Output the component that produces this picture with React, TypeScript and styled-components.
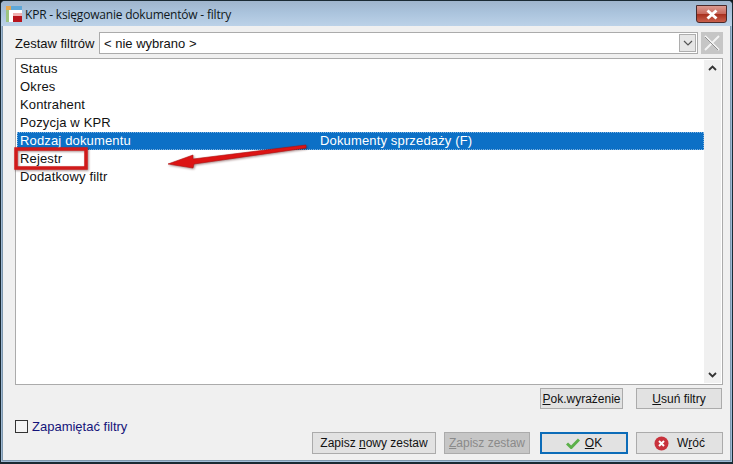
import React from "react";
import styled, { createGlobalStyle } from "styled-components";

const Global = createGlobalStyle`
  html, body { margin: 0; padding: 0; background: #10181c; }
  * { box-sizing: border-box; }
`;

const Win = styled.div`
  position: relative;
  width: 733px;
  height: 464px;
  display: flex;
  flex-direction: column;
  overflow: hidden;
  border: 1px solid #1a2a33;
  border-bottom-width: 2px;
  border-radius: 5px 5px 0 0;
  background: linear-gradient(90deg, #9db8d3 0%, #a9c4df 50%, #9db9d6 100%);
  font-family: "Liberation Sans", Arial, sans-serif;
  font-size: 13px;
  color: #111;
`;

const TitleBar = styled.div`
  height: 25px;
  flex: none;
  display: flex;
  align-items: center;
  padding-left: 4px;
  gap: 2px;
  position: relative;
  background: linear-gradient(180deg, #9fb5cc 0%, #aac3dc 45%, #bcd2e8 100%);
`;

const TitleText = styled.span`
  font-family: "Open Sans", "Noto Sans", sans-serif;
  font-size: 12px;
  letter-spacing: -0.2px;
  color: #101820;
  margin-top: 1px;
`;

const CloseBtn = styled.div`
  position: absolute;
  right: 5px;
  top: 4px;
  width: 31px;
  height: 18px;
  border: 1px solid #4a2a2a;
  border-radius: 0 0 3px 3px;
  display: flex;
  align-items: center;
  justify-content: center;
  background: linear-gradient(180deg, #dc9a90 0%, #c8695c 48%, #a8301e 52%, #c9604c 100%);
`;

const Body = styled.div`
  flex: 1;
  margin: 0 1px 1px 1px;
  background: #f0f0f0;
  border-left: 1px solid #7f98ad;
  border-right: 1px solid #7f98ad;
  border-bottom: 1px solid #7f98ad;
  padding: 6px 7px 0 12px;
  display: flex;
  flex-direction: column;
`;

const FilterRow = styled.div`
  display: flex;
  align-items: center;
  height: 22px;
  gap: 3px;
`;

const FilterLabel = styled.label`
  width: 81px;
  flex: none;
`;

const Combo = styled.div`
  flex: 1;
  height: 22px;
  background: #fff;
  border: 1px solid #ababab;
  padding: 0 1px 0 4px;
  display: flex;
  align-items: center;
  justify-content: space-between;
`;

const ComboArrow = styled.div`
  width: 17px;
  height: 18px;
  background: #e6e6e6;
  border: 1px solid #adadad;
  display: flex;
  align-items: center;
  justify-content: center;
`;

const ClearBtn = styled.div`
  width: 22px;
  height: 22px;
  background: #c6c6c6;
  display: flex;
  align-items: center;
  justify-content: center;
`;

const ListBox = styled.div`
  margin-top: 4px;
  height: 327px;
  flex: none;
  background: #fff;
  border: 1px solid #ababab;
  padding: 1px;
  display: flex;
`;

const Rows = styled.div`
  flex: 1;
`;

const Row = styled.div<{ $selected?: boolean }>`
  height: 18px;
  display: flex;
  align-items: center;
  padding: 0 0 2px 3px;
  letter-spacing: 0.15px;
  background: ${(p) => (p.$selected ? "#0c70c6" : "transparent")};
  color: ${(p) => (p.$selected ? "#fff" : "#111")};
  outline: ${(p) => (p.$selected ? "1px dotted #7fb2de" : "none")};
  outline-offset: -1px;
`;

const RowName = styled.span`
  width: 300px;
  flex: none;
`;

const ScrollTrack = styled.div`
  width: 17px;
  background: #f0f0f0;
  display: flex;
  flex-direction: column;
  justify-content: space-between;
  align-items: center;
  padding: 5px 0;
`;

const ActionRow = styled.div`
  display: flex;
  justify-content: flex-end;
  gap: 13px;
  margin: 3px 1px 0 0;
`;

const Btn = styled.div<{
  $w: number;
  $h: number;
  $gap?: number;
  $ml?: number;
  $disabled?: boolean;
  $default?: boolean;
}>`
  width: ${(p) => p.$w}px;
  height: ${(p) => p.$h}px;
  margin-left: ${(p) => p.$ml ?? 0}px;
  display: flex;
  align-items: center;
  justify-content: center;
  gap: ${(p) => p.$gap ?? 0}px;
  font-size: 12px;
  white-space: nowrap;
  background: ${(p) => (p.$disabled ? "#c6c6c6" : "#e2e2e2")};
  color: ${(p) => (p.$disabled ? "#8a8a8a" : "#111")};
  border: ${(p) => (p.$default ? "2px solid #0c6cb8" : "1px solid #ababab")};
`;

const Footer = styled.div`
  display: flex;
  align-items: flex-start;
  margin-top: 8px;
`;

const RememberBox = styled.div`
  display: flex;
  align-items: center;
  gap: 4px;
  color: #14147a;
  height: 18px;
`;

const Check = styled.div`
  width: 13px;
  height: 13px;
  border: 1px solid #333;
  background: #f4f4f4;
`;

const FooterBtns = styled.div`
  margin-left: auto;
  margin-top: 15px;
  display: flex;
  gap: 8px;
`;

const Overlay = styled.svg`
  position: absolute;
  left: -1px;
  top: -1px;
  pointer-events: none;
  filter: drop-shadow(1px 1px 1px rgba(60, 0, 0, 0.45));
`;

const App = () => (
  <>
    <Global />
    <Win>
      <TitleBar>
        <svg width="18" height="18" viewBox="0 0 18 18">
          <rect x="1" y="1" width="16" height="16" fill="#fff" />
          <rect x="1" y="1" width="5" height="4" fill="#e8a850" />
          <rect x="6" y="1" width="11" height="4" fill="#5fa8d8" />
          <rect x="1" y="5" width="3" height="12" fill="#9cc480" />
          <rect x="8" y="8" width="9" height="9" fill="#b8141c" />
          <rect x="8" y="8" width="9" height="3" fill="#f0b0b0" />
        </svg>
        <TitleText>KPR - księgowanie dokumentów - filtry</TitleText>
        <CloseBtn>
          <svg width="14" height="11" viewBox="0 0 14 11">
            <path d="M2.5 1.5 L11.5 9.5 M11.5 1.5 L2.5 9.5" stroke="#fff" strokeWidth="3" />
          </svg>
        </CloseBtn>
      </TitleBar>
      <Body>
        <FilterRow>
          <FilterLabel>Zestaw filtrów</FilterLabel>
          <Combo>
            <span>&lt; nie wybrano &gt;</span>
            <ComboArrow>
              <svg width="10" height="6" viewBox="0 0 10 6">
                <path d="M1 1 L5 5 L9 1" fill="none" stroke="#555" strokeWidth="1.2" />
              </svg>
            </ComboArrow>
          </Combo>
          <ClearBtn>
            <svg width="18" height="18" viewBox="0 0 18 18">
              <path d="M2 2 L16 16 M16 2 L2 16" stroke="#f4f4f4" strokeWidth="1.8" />
              <path d="M2 3 L15 16" stroke="#8e8e8e" strokeWidth="1" />
            </svg>
          </ClearBtn>
        </FilterRow>
        <ListBox>
          <Rows>
            <Row>Status</Row>
            <Row>Okres</Row>
            <Row>Kontrahent</Row>
            <Row>Pozycja w KPR</Row>
            <Row $selected>
              <RowName>Rodzaj dokumentu</RowName>
              <span>Dokumenty sprzedaży (F)</span>
            </Row>
            <Row>Rejestr</Row>
            <Row>Dodatkowy filtr</Row>
          </Rows>
          <ScrollTrack>
            <svg width="9" height="6" viewBox="0 0 9 6">
              <path d="M1 5 L4.5 1.5 L8 5" fill="none" stroke="#333" strokeWidth="1.8" />
            </svg>
            <svg width="9" height="6" viewBox="0 0 9 6">
              <path d="M1 1 L4.5 4.5 L8 1" fill="none" stroke="#333" strokeWidth="1.8" />
            </svg>
          </ScrollTrack>
        </ListBox>
        <ActionRow>
          <Btn $w={83} $h={21}>
            <span>
              <u>P</u>ok.wyrażenie
            </span>
          </Btn>
          <Btn $w={86} $h={21}>
            <span>
              <u>U</u>suń filtry
            </span>
          </Btn>
        </ActionRow>
        <Footer>
          <RememberBox>
            <Check />
            <span>Zapamiętać filtry</span>
          </RememberBox>
          <FooterBtns>
            <Btn $w={124} $h={22}>
              <span>
                Zapisz <u>n</u>owy zestaw
              </span>
            </Btn>
            <Btn $w={86} $h={22} $disabled>
              <span>
                <u>Z</u>apisz zestaw
              </span>
            </Btn>
            <Btn $w={88} $h={22} $ml={2} $gap={5} $default>
              <svg width="14" height="11" viewBox="0 0 14 11">
                <path d="M1 5.5 L5.2 9.5 L13 1.5" fill="none" stroke="#5cb04a" strokeWidth="3" />
              </svg>
              <span>
                <u>O</u>K
              </span>
            </Btn>
            <Btn $w={87} $h={22} $gap={8}>
              <svg width="15" height="15" viewBox="0 0 15 15">
                <circle cx="7.5" cy="7.5" r="7" fill="#c8323c" />
                <path d="M5 5 L10 10 M10 5 L5 10" stroke="#fff" strokeWidth="2" />
              </svg>
              <span>
                W<u>r</u>óć
              </span>
            </Btn>
          </FooterBtns>
        </Footer>
      </Body>
      <Overlay width="733" height="464" viewBox="0 0 733 464">
        <rect x="16" y="149" width="70" height="19" fill="none" stroke="#d11a1a" strokeWidth="3.5" />
        <path d="M306 145 L193 159 L193 155 L168 164 L193 168 L194 164 L306 148 Z" fill="#dc1414" stroke="#b01010" strokeWidth="0.6" />
      </Overlay>
    </Win>
  </>
);

export default App;
